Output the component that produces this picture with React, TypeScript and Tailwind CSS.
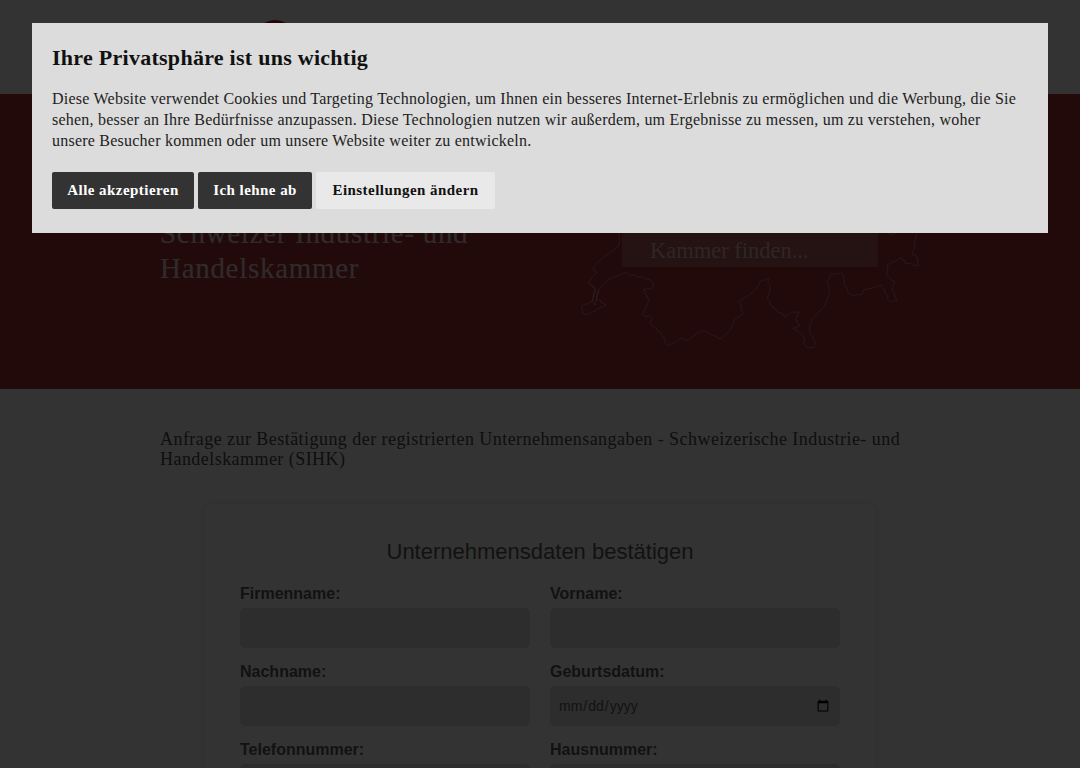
const serif = "font-['Liberation_Serif',serif]";

// outline traced from the reference, the two lists are in crop coordinates
const west = [
  [133, 10], [135, 30], [128, 50], [105, 68], [85, 82], [65, 100], [55, 115], [65, 128], [50, 145], [42, 158],
  [52, 172], [62, 178], [55, 200], [50, 215], [30, 222], [18, 232], [22, 248], [38, 252], [58, 245], [70, 235],
  [93, 225], [78, 218], [65, 205], [70, 180], [90, 160], [100, 147], [125, 140], [150, 128], [180, 135], [215, 148],
  [238, 160], [232, 175], [205, 180], [215, 195], [222, 210], [210, 235], [205, 255], [230, 262], [225, 280], [245, 295],
  [262, 320], [275, 345], [295, 340], [318, 325], [340, 330], [378, 302], [410, 315], [440, 325], [465, 300], [478, 270],
  [505, 250], [490, 215], [530, 190],
].map(([x, y]) => [x + 105, y + 90]);

const east = [
  [20, 175], [30, 155], [55, 145], [60, 175], [52, 205], [75, 235], [105, 262], [125, 245], [148, 245], [135, 270],
  [150, 285], [130, 295], [160, 320], [168, 348], [190, 355], [195, 335], [178, 295], [185, 270], [225, 225], [240, 190],
  [230, 155], [245, 130], [278, 130], [282, 165], [305, 195], [335, 195], [340, 180], [395, 165], [405, 190], [420, 215],
  [440, 210], [425, 180], [435, 155], [410, 135], [412, 105], [455, 82], [465, 100], [505, 108], [505, 85], [487, 75],
  [500, 12],
].map(([x, y]) => [x + 630, y + 90]);

// splits each segment so the border gets its small wiggle
function wiggle(points: number[][]) {
  const out: string[] = [];
  points.forEach(([x, y], i) => {
    if (i === 0) {
      out.push(`M${x} ${y}`);
      return;
    }
    const [px, py] = points[i - 1];
    for (let s = 1; s <= 3; s++) {
      const t = s / 3;
      const off = s === 3 ? 0 : Math.sin(i * 2.3 + s * 1.7) * 3;
      out.push(`L${(px + (x - px) * t + off).toFixed(1)} ${(py + (y - py) * t - off).toFixed(1)}`);
    }
  });
  return out.join(" ");
}

const mapPath = [
  wiggle([...west, ...east]),
  "M167 268 L157 300 L165 315 L177 270",
  "M1040 95 L1055 105 L1070 98",
].join(" ");

const fields = [
  ["Firmenname:", "text", "Vorname:", "text"],
  ["Nachname:", "text", "Geburtsdatum:", "date"],
  ["Telefonnummer:", "text", "Hausnummer:", "text"],
];

function Field({ label, type }: { label: string; type: string }) {
  return (
    <label className="block">
      <span className="block text-base font-bold leading-[18px] mb-[5px] text-[#5c5c5c]">{label}</span>
      <input
        type={type}
        className="block w-full h-10 px-2 rounded-[5px] bg-[#dedede] text-sm text-[#5c5c5c] font-['Liberation_Sans',sans-serif]"
      />
    </label>
  );
}

export default function App() {
  return (
    <div className="relative h-[768px] overflow-hidden bg-white font-['Liberation_Sans',sans-serif]">
      <header className="h-[94px] bg-white pl-[255px] pt-5">
        <div className="w-10 h-10 rounded-full bg-[#b01820]" />
      </header>

      <section className="relative h-[295px] bg-[#a83438] px-40 flex justify-between">
        <h1 className={`${serif} mt-[122px] w-[340px] text-[29px] leading-[35px] tracking-[0.7px] text-white/80`}>
          Schweizer Industrie- und Handelskammer
        </h1>
        <svg
          viewBox="0 0 1200 600"
          className="absolute left-[540px] top-[106px] w-[400px] h-[200px]"
          fill="none"
          stroke="#ffffff"
          strokeWidth="2.5"
          strokeOpacity="0.4"
          strokeLinejoin="round"
        >
          <path d={mapPath} />
        </svg>
        <div className={`${serif} relative ml-auto mr-[42px] mt-[127px] w-64 h-[46px] pl-7 pt-[14px] flex items-center bg-white/20 text-[22.5px] text-white/60`}>
          Kammer finden...
        </div>
      </section>

      <main className="px-40 pt-10">
        <p className={`${serif} text-lg leading-5 tracking-[0.45px] text-[#4a4a4a]`}>
          Anfrage zur Bestätigung der registrierten Unternehmensangaben - Schweizerische Industrie- und Handelskammer (SIHK)
        </p>
        <form className="mt-[35px] mx-[45px] px-[35px] pt-[35px] pb-10 rounded-lg bg-white shadow-[0_0_10px_rgba(0,0,0,0.12)]">
          <h2 className="text-[22px] leading-[26px] text-center text-[#5c5c5c] mb-5">Unternehmensdaten bestätigen</h2>
          <div className="grid grid-cols-2 gap-x-5 gap-y-[15px]">
            {fields.map((row) => (
              <div key={row[0]} className="contents">
                <Field label={row[0]} type={row[1]} />
                <Field label={row[2]} type={row[3]} />
              </div>
            ))}
          </div>
        </form>
      </main>

      <div className="absolute inset-0 bg-black/80" />

      <div role="dialog" className={`${serif} absolute left-8 top-[23px] w-[1016px] h-[210px] px-5 pt-5 bg-[#dcdcdc] text-[#111]`}>
        <h3 className="text-[22px] leading-[30px] font-bold tracking-[0.27px]">Ihre Privatsphäre ist uns wichtig</h3>
        <p className="mt-[15px] text-base leading-[21px] tracking-[0.23px] text-[#222]">
          Diese Website verwendet Cookies und Targeting Technologien, um Ihnen ein besseres Internet-Erlebnis zu ermöglichen und die Werbung, die Sie
          <br />
          sehen, besser an Ihre Bedürfnisse anzupassen. Diese Technologien nutzen wir außerdem, um Ergebnisse zu messen, um zu verstehen, woher
          <br />
          unsere Besucher kommen oder um unsere Website weiter zu entwickeln.
        </p>
        <div className="mt-[21px] flex gap-1 tracking-[0.45px]">
          <button className="w-[142px] h-[37px] rounded-[2px] bg-[#333] text-white text-[15px] font-bold">Alle akzeptieren</button>
          <button className="w-[114px] h-[37px] rounded-[2px] bg-[#333] text-white text-[15px] font-bold">Ich lehne ab</button>
          <button className="w-[179px] h-[37px] rounded-[2px] bg-[#e9e9e9] text-[#111] text-[15px] font-bold">Einstellungen ändern</button>
        </div>
      </div>
    </div>
  );
}
